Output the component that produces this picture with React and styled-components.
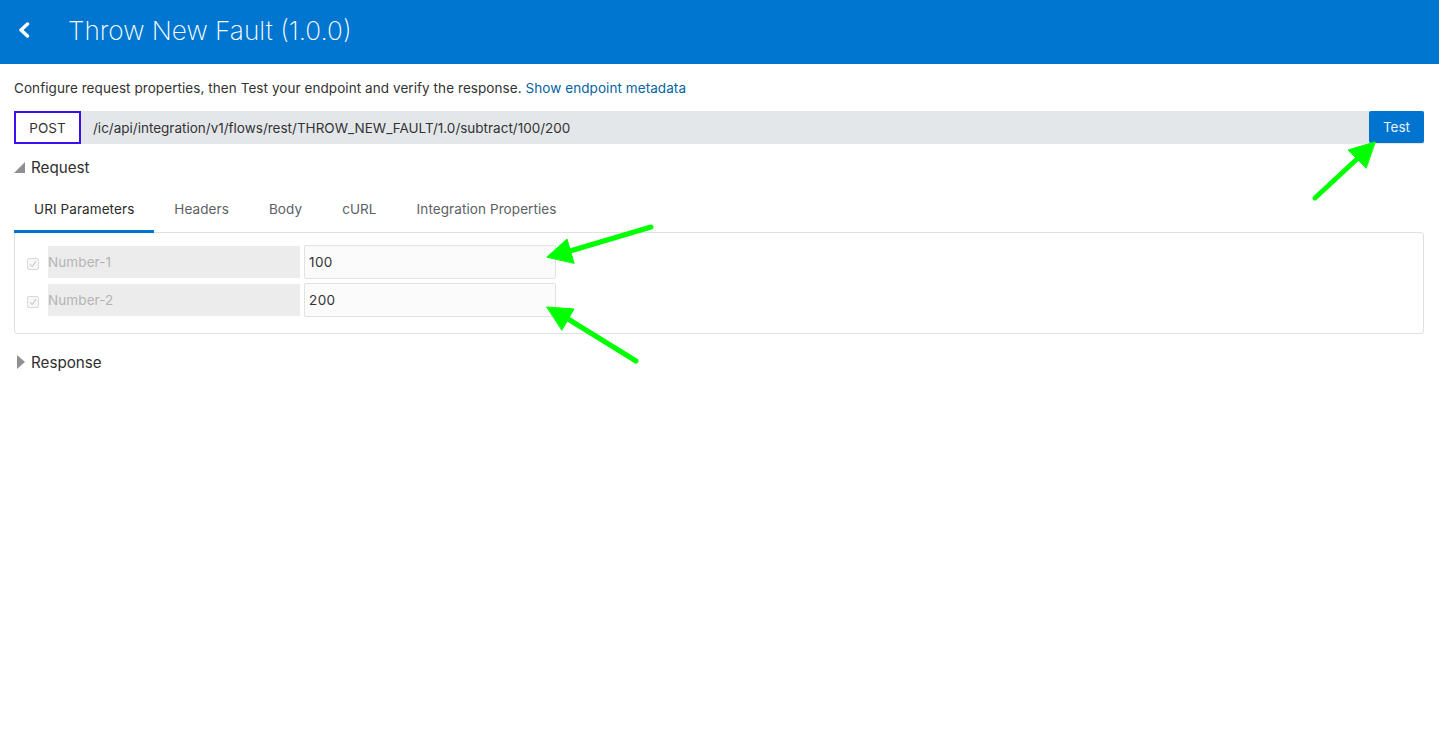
import styled, { createGlobalStyle } from "styled-components";

const GlobalStyle = createGlobalStyle`
  html, body {
    margin: 0;
    background: #fff;
  }
  body {
    font-family: "Inter", "Liberation Sans", sans-serif;
    color: #2f2f2f;
  }
`;

const Page = styled.div`
  position: relative;
  width: 1439px;
  height: 736px;
  overflow: hidden;
`;

const Header = styled.header`
  display: flex;
  align-items: center;
  height: 64px;
  padding-bottom: 4px;
  box-sizing: border-box;
  background: #0176d0;
  color: #fff;
`;

const BackButton = styled.div`
  display: flex;
  width: 68px;
  padding-left: 17px;
  box-sizing: border-box;
`;

const Title = styled.h1`
  margin: 0;
  font-size: 26.2px;
  font-weight: 200;
`;

const Content = styled.main`
  padding: 0 15px 0 14px;
`;

const Intro = styled.p`
  margin: 0;
  padding-top: 16px;
  height: 31px;
  line-height: 16px;
  font-size: 13.5px;
  letter-spacing: 0.07px;
  color: #333;
`;

const MetaLink = styled.a`
  color: #04639f;
`;

const EndpointBar = styled.div`
  display: flex;
  height: 33px;
  background: #e3e7ea;
`;

const Method = styled.div`
  display: flex;
  align-items: center;
  justify-content: center;
  width: 67px;
  box-sizing: border-box;
  border: 2px solid #3a10f0;
  background: #fff;
  font-size: 13.5px;
  color: #333;
`;

const Url = styled.div`
  flex: 1;
  padding-left: 12px;
  line-height: 34px;
  font-size: 13.5px;
  color: #333;
`;

const TestButton = styled.button`
  width: 55px;
  height: 32px;
  padding: 0;
  border: none;
  border-radius: 2px;
  background: #0174cf;
  color: #e8f3fb;
  font-family: inherit;
  font-size: 13.5px;
`;

const Section = styled.div`
  display: flex;
  align-items: center;
  gap: 6px;
  font-size: 15.2px;
  color: #2f2f2f;
`;

const RequestSection = styled(Section)`
  height: 46px;
`;

const ResponseSection = styled(Section)`
  height: 20px;
  margin-top: 18px;
  padding-left: 3px;
`;

const Tabs = styled.nav`
  display: flex;
  height: 43px;
`;

const Tab = styled.div`
  display: flex;
  align-items: center;
  padding: 0 20px 2px;
  height: 43px;
  box-sizing: border-box;
  font-size: 13.5px;
  letter-spacing: 0.09px;
  color: ${(p) => (p.$active ? "#2b2b2b" : "#5c6166")};
  border-bottom: 3px solid ${(p) => (p.$active ? "#0174cf" : "transparent")};
  position: relative;
  z-index: 1;
`;

const Panel = styled.section`
  display: flex;
  flex-direction: column;
  gap: 4px;
  height: 102px;
  margin-top: -1px;
  padding: 12px 12px 0;
  box-sizing: border-box;
  border: 1px solid #dfe0e1;
  border-radius: 3px;
`;

const ParamRow = styled.div`
  display: flex;
  align-items: center;
  height: 34px;
`;

const Check = styled.span`
  display: flex;
  align-items: center;
  justify-content: center;
  width: 10px;
  height: 10px;
  margin-top: 3px;
  border: 1px solid #d9d9d9;
  border-radius: 2px;
  background: #f7f7f7;
`;

const ParamName = styled.div`
  width: 252px;
  height: 32px;
  margin: 0 4px 0 9px;
  background: #ececec;
  line-height: 32px;
  font-size: 13.5px;
  letter-spacing: 0.1px;
  color: #b4b4b4;
`;

const ParamValue = styled.div`
  width: 252px;
  height: 34px;
  padding-left: 4px;
  box-sizing: border-box;
  border: 1px solid #e2e2e2;
  border-radius: 2px;
  background: #fbfbfb;
  line-height: 32px;
  font-size: 13.5px;
  letter-spacing: 0.4px;
  color: #333;
`;

const Annotations = styled.svg`
  position: absolute;
  top: 0;
  left: 0;
  pointer-events: none;
`;

const params = [
  { name: "Number-1", value: "100" },
  { name: "Number-2", value: "200" },
];

const tabs = ["URI Parameters", "Headers", "Body", "cURL", "Integration Properties"];

function App() {
  return (
    <Page>
      <GlobalStyle />
      <Header>
        <BackButton>
          <svg width="14" height="16" viewBox="0 0 14 16">
            <path d="M10.5 2 L4 8 L10.5 14" fill="none" stroke="#fff" strokeWidth="3.4" strokeLinejoin="round" strokeLinecap="round" />
          </svg>
        </BackButton>
        <Title>Throw New Fault (1.0.0)</Title>
      </Header>
      <Content>
        <Intro>
          Configure request properties, then Test your endpoint and verify the response. <MetaLink>Show endpoint metadata</MetaLink>
        </Intro>
        <EndpointBar>
          <Method>POST</Method>
          <Url>/ic/api/integration/v1/flows/rest/THROW_NEW_FAULT/1.0/subtract/100/200</Url>
          <TestButton>Test</TestButton>
        </EndpointBar>
        <RequestSection>
          <svg width="11" height="11" viewBox="0 0 11 11">
            <path d="M11 0 V11 H0 Z" fill="#8e9194" />
          </svg>
          Request
        </RequestSection>
        <Tabs>
          {tabs.map((t, i) => (
            <Tab key={t} $active={i === 0}>{t}</Tab>
          ))}
        </Tabs>
        <Panel>
          {params.map((p) => (
            <ParamRow key={p.name}>
              <Check>
                <svg width="8" height="8" viewBox="0 0 8 8">
                  <path d="M1 4.2 L3.2 6.6 L7 1" fill="none" stroke="#bdbdbd" strokeWidth="1" />
                </svg>
              </Check>
              <ParamName>{p.name}</ParamName>
              <ParamValue>{p.value}</ParamValue>
            </ParamRow>
          ))}
        </Panel>
        <ResponseSection>
          <svg width="8" height="14" viewBox="0 0 8 14">
            <path d="M0 0 L8 7 L0 14 Z" fill="#8e9194" />
          </svg>
          Response
        </ResponseSection>
      </Content>
      <Annotations width="1439" height="736" viewBox="0 0 1439 736">
        <g fill="#00ff00" stroke="#00ff00" strokeLinecap="round">
          <path d="M1315 198 L1357 159" strokeWidth="5" />
          <path d="M1375 142 L1348 150 L1366 168 Z" strokeWidth="1" />
          <path d="M651 227 L570 251" strokeWidth="5" />
          <path d="M547 257 L567 239 L574 263 Z" strokeWidth="1" />
          <path d="M636 361 L568 319" strokeWidth="5" />
          <path d="M547 307 L574 309 L562 330 Z" strokeWidth="1" />
        </g>
      </Annotations>
    </Page>
  );
}

export default App;
